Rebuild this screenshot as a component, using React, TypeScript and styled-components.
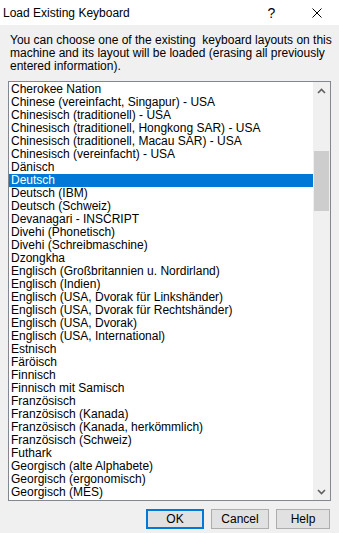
import React from "react";
import styled, { createGlobalStyle } from "styled-components";

const LAYOUTS = [
  "Cherokee Nation",
  "Chinese (vereinfacht, Singapur) - USA",
  "Chinesisch (traditionell) - USA",
  "Chinesisch (traditionell, Hongkong SAR) - USA",
  "Chinesisch (traditionell, Macau SAR) - USA",
  "Chinesisch (vereinfacht) - USA",
  "Dänisch",
  "Deutsch",
  "Deutsch (IBM)",
  "Deutsch (Schweiz)",
  "Devanagari - INSCRIPT",
  "Divehi (Phonetisch)",
  "Divehi (Schreibmaschine)",
  "Dzongkha",
  "Englisch (Großbritannien u. Nordirland)",
  "Englisch (Indien)",
  "Englisch (USA, Dvorak für Linkshänder)",
  "Englisch (USA, Dvorak für Rechtshänder)",
  "Englisch (USA, Dvorak)",
  "Englisch (USA, International)",
  "Estnisch",
  "Färöisch",
  "Finnisch",
  "Finnisch mit Samisch",
  "Französisch",
  "Französisch (Kanada)",
  "Französisch (Kanada, herkömmlich)",
  "Französisch (Schweiz)",
  "Futhark",
  "Georgisch (alte Alphabete)",
  "Georgisch (ergonomisch)",
  "Georgisch (MES)",
];

const SELECTED = "Deutsch";

const GlobalStyle = createGlobalStyle`
  html, body {
    margin: 0;
    padding: 0;
    background: #f0f0f0;
  }
  body {
    font-family: "Liberation Sans", Arial, sans-serif;
    font-size: 12px;
    color: #000;
  }
`;

const Dialog = styled.div`
  width: 339px;
  height: 533px;
  display: flex;
  flex-direction: column;
  background: #f0f0f0;
  overflow: hidden;
`;

const TitleBar = styled.div`
  height: 25px;
  background: #fff;
  display: flex;
  align-items: center;
  padding-left: 3px;
`;

const Title = styled.div`
  flex: 1;
  font-size: 12px;
`;

const TitleButton = styled.div`
  width: 45px;
  height: 25px;
  display: flex;
  align-items: center;
  justify-content: center;
  font-size: 14px;
`;

const Content = styled.div`
  flex: 1;
  display: flex;
  flex-direction: column;
  padding: 9px 8px 0 8px;
`;

const Description = styled.p`
  margin: 0 0 8px 2px;
  line-height: 13px;
  white-space: nowrap;
`;

const ListBox = styled.div`
  height: 420px;
  box-sizing: border-box;
  border: 1px solid #828790;
  background: #fff;
  display: flex;
`;

const Items = styled.div`
  flex: 1;
  padding-top: 1px;
  overflow: hidden;
`;

const Item = styled.div<{ $selected?: boolean }>`
  height: 13px;
  line-height: 13px;
  padding-left: 2px;
  white-space: nowrap;
  background: ${(p) => (p.$selected ? "#0078d7" : "transparent")};
  color: ${(p) => (p.$selected ? "#fff" : "#000")};
`;

const ScrollBar = styled.div`
  width: 17px;
  background: #f0f0f0;
  display: flex;
  flex-direction: column;
`;

const Arrow = styled.div`
  height: 17px;
  display: flex;
  align-items: center;
  justify-content: center;
`;

const Track = styled.div`
  flex: 1;
  display: flex;
  flex-direction: column;
  padding: 0 1px;
`;

const Thumb = styled.div<{ $top: number; $size: number }>`
  margin-top: ${(p) => p.$top}px;
  height: ${(p) => p.$size}px;
  background: #cdcdcd;
`;

const Buttons = styled.div`
  display: flex;
  justify-content: flex-end;
  gap: 7px;
  padding: 8px 1px 0 0;
`;

const Button = styled.button<{ $w: number; $default?: boolean }>`
  width: ${(p) => p.$w}px;
  height: 20px;
  box-sizing: border-box;
  margin: 0;
  padding: 0;
  font-family: inherit;
  font-size: 12px;
  color: #000;
  background: #e1e1e1;
  border: ${(p) => (p.$default ? "2px solid #0078d7" : "1px solid #adadad")};
`;

const ChevronUp = () => (
  <svg width="9" height="6" viewBox="0 0 9 6">
    <path d="M1 5 L4.5 1.5 L8 5" fill="none" stroke="#606060" strokeWidth="1.6" />
  </svg>
);

const ChevronDown = () => (
  <svg width="9" height="6" viewBox="0 0 9 6">
    <path d="M1 1 L4.5 4.5 L8 1" fill="none" stroke="#606060" strokeWidth="1.6" />
  </svg>
);

const App = () => {
  return (
    <>
      <GlobalStyle />
      <Dialog>
        <TitleBar>
          <Title>Load Existing Keyboard</Title>
          <TitleButton>?</TitleButton>
          <TitleButton>
            <svg width="10" height="10" viewBox="0 0 10 10">
              <path d="M0.5 0.5 L9.5 9.5 M9.5 0.5 L0.5 9.5" stroke="#000" strokeWidth="1" />
            </svg>
          </TitleButton>
        </TitleBar>
        <Content>
          <Description>
            You can choose one of the existing&nbsp; keyboard layouts on this
            <br />
            machine and its layout will be loaded (erasing all previously
            <br />
            entered information).
          </Description>
          <ListBox>
            <Items>
              {LAYOUTS.map((name) => (
                <Item key={name} $selected={name === SELECTED}>
                  {name}
                </Item>
              ))}
            </Items>
            <ScrollBar>
              <Arrow>
                <ChevronUp />
              </Arrow>
              <Track>
                <Thumb $top={52} $size={60} />
              </Track>
              <Arrow>
                <ChevronDown />
              </Arrow>
            </ScrollBar>
          </ListBox>
          <Buttons>
            <Button $w={58} $default>
              OK
            </Button>
            <Button $w={58}>Cancel</Button>
            <Button $w={54}>Help</Button>
          </Buttons>
        </Content>
      </Dialog>
    </>
  );
};

export default App;
